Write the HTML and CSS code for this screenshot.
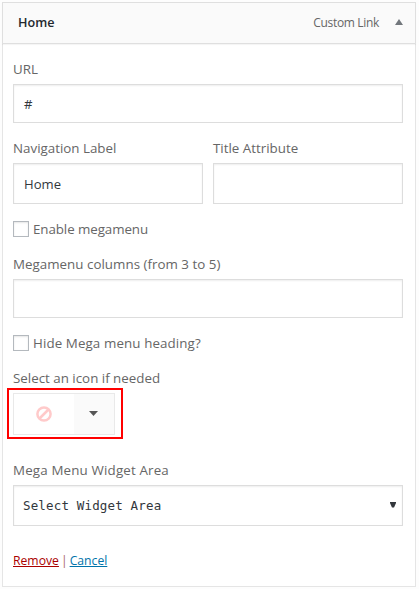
FILE: index.html
```html
<!DOCTYPE html>
<html lang="en">
<head>
<meta charset="utf-8">
<title>Menu item</title>
<link rel="stylesheet" href="styles.css">
</head>
<body>
<section class="item">
  <header class="bar">
    <span class="title">Home</span>
    <span class="type">Custom Link</span>
    <svg class="toggle" width="8" height="6" viewBox="0 0 8 6"><path d="M4 0L8 6H0z" fill="#72777c"/></svg>
  </header>
  <div class="settings">
    <div class="field">
      <label>URL</label>
      <div class="input">#</div>
    </div>
    <div class="pair">
      <div class="field">
        <label>Navigation Label</label>
        <div class="input tall">Home</div>
      </div>
      <div class="field">
        <label>Title Attribute</label>
        <div class="input tall"></div>
      </div>
    </div>
    <div class="check"><span class="box"></span><span class="enable">Enable megamenu</span></div>
    <div class="field">
      <label class="columns">Megamenu columns (from 3 to 5)</label>
      <div class="input"></div>
    </div>
    <div class="check"><span class="box"></span><span class="hide">Hide Mega menu heading?</span></div>
    <div class="field">
      <label>Select an icon if needed</label>
      <div class="picker">
        <span class="chosen"><svg width="16" height="16" viewBox="0 0 16 16" fill="none" stroke="#ffcaca" stroke-width="2.5"><circle cx="8" cy="8" r="6.600"/><path d="M3.500 12.500l9-9"/></svg></span>
        <span class="open"><svg width="9" height="5" viewBox="0 0 9 5"><path d="M0 0h9L4.500 5z" fill="#555"/></svg></span>
      </div>
    </div>
    <div class="field area">
      <label class="wide">Mega Menu Widget Area</label>
      <div class="input tall select"><span>Select Widget Area</span><svg width="6" height="6" viewBox="0 0 6 6"><path d="M0 0h6v1L4 5.500H2L0 1z" fill="#32373c"/></svg></div>
    </div>
    <div class="actions"><a class="remove">Remove</a><span class="separator">|</span><a class="cancel">Cancel</a></div>
  </div>
</section>
</body>
</html>
```
FILE: styles.css
```css
* { box-sizing: border-box; }
body {
  margin: 0;
  padding: 2px;
  background: #fdfdfd;
  font: 13.35px/20px "Open Sans", "Noto Sans", sans-serif;
  color: #666;
  white-space: nowrap;
}
.item { width: 414px; height: 585px; border: 1px solid #e5e5e5; background: #fff; }
.bar {
  display: flex;
  align-items: center;
  height: 42px;
  margin: -1px -1px 0;
  padding: 0 12px 0 15px;
  border: 1px solid #dfdfdf;
  background: #fafafa;
  box-shadow: 0 1px 1px rgba(0, 0, 0, .04);
}
.title { flex: 1; color: #23282d; font-weight: 600; font-size: 12.6px; }
.type { font-size: 12px; letter-spacing: -.33px; margin-right: 16px; }
.toggle { margin-top: -3px; }
.settings { padding: 15px 12px 0 10px; }
label { display: block; height: 20px; margin-bottom: 5px; }
.enable { letter-spacing: -.08px; }
.columns { letter-spacing: .02px; }
.hide { letter-spacing: .1px; }
.wide { letter-spacing: .16px; }
.input {
  display: flex;
  align-items: center;
  height: 39px;
  padding: 0 10px;
  border: 1px solid #ddd;
  background: #fff;
  box-shadow: inset 0 1px 2px rgba(0, 0, 0, .07);
  color: #32373c;
  font-size: 13.1px;
}
.tall { height: 41px; }
.pair { display: grid; grid-template-columns: 190px 190px; gap: 10px; margin-top: 15px; }
.check { display: flex; align-items: center; gap: 4px; height: 16px; margin: 17px 0; }
.box { width: 16px; height: 16px; border: 1px solid #b4b9be; box-shadow: inset 0 1px 2px rgba(0, 0, 0, .1); }
.picker { position: relative; display: flex; width: 102px; height: 42px; border: 1px solid #e9e9e9; }
.picker::after {
  content: "";
  position: absolute;
  box-sizing: border-box;
  left: -7px;
  top: -6px;
  width: 116px;
  height: 51px;
  border: 2px solid #f00;
}
.chosen, .open { display: flex; align-items: center; justify-content: center; padding-bottom: 1px; }
.chosen { width: 60px; }
.open { width: 40px; padding-right: 2px; background: #fafafa; }
.area { margin-top: 25px; }
.select {
  justify-content: space-between;
  padding: 0 6px 0 9px;
  font-family: "DejaVu Sans Mono", monospace;
  font-size: 12.5px;
  letter-spacing: .16px;
}
.select svg { margin-top: -2px; }
.actions { display: flex; margin-top: 25px; font-size: 12.2px; }
.actions a { text-decoration: underline; }
.remove { color: #a00; }
.separator { margin: 0 2px; color: #a66; }
.cancel { color: #0073aa; }
```
